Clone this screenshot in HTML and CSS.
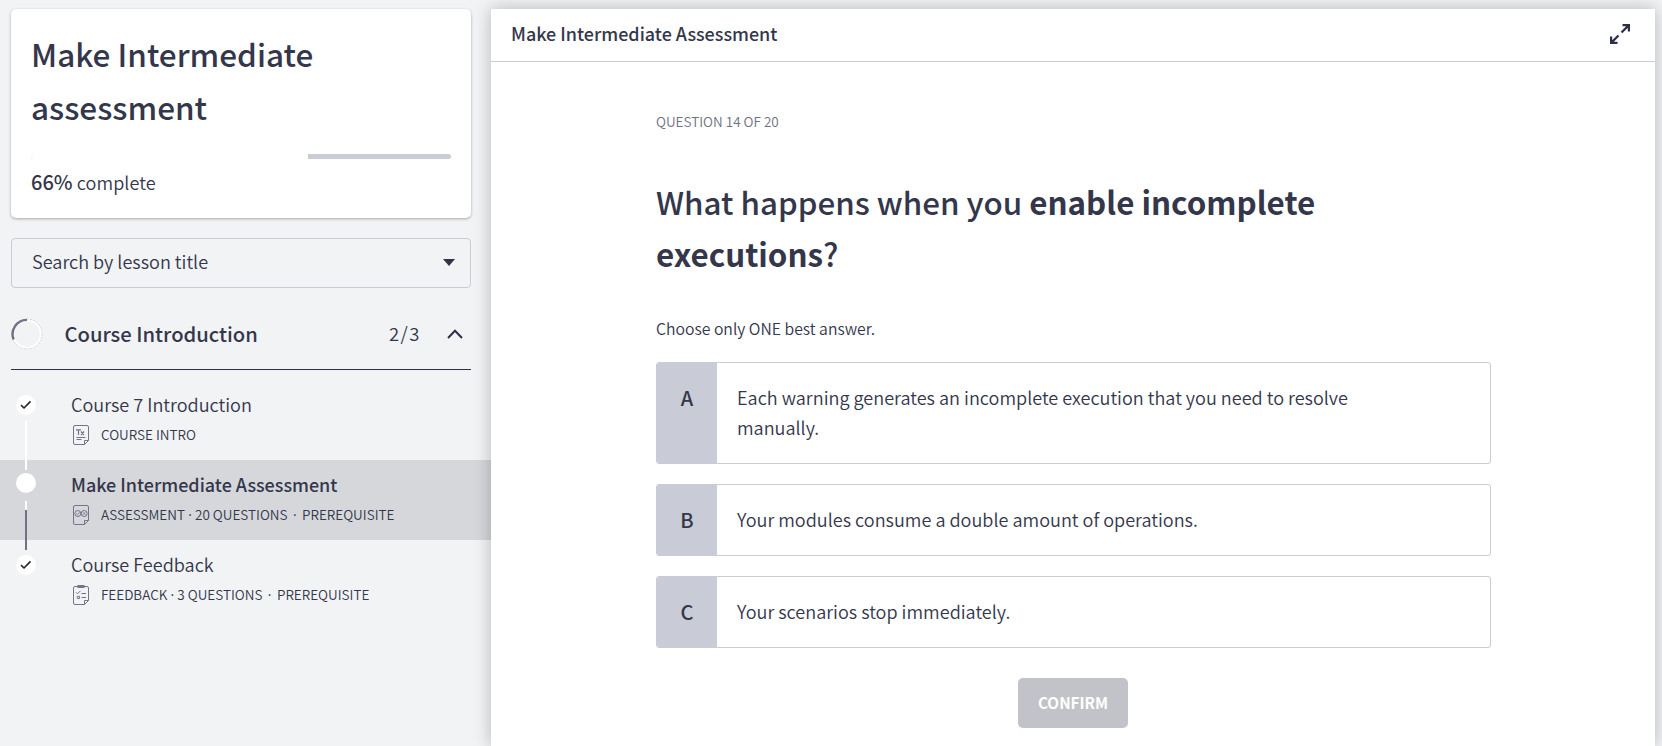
FILE: index.html
```html
<!DOCTYPE html>
<html lang="en">
<head>
<meta charset="utf-8">
<title>Make Intermediate Assessment</title>
<link rel="stylesheet" href="styles.css">
</head>
<body>
<div class="app">
  <aside class="sidebar">
    <section class="course-card">
      <h1 class="course-title">Make Intermediate assessment</h1>
      <div class="progress"><div class="progress-done" style="width:66%"></div></div>
      <p class="percent"><b>66%</b> <span>complete</span></p>
    </section>
    <div class="search"><span>Search by lesson title</span>
      <svg width="12" height="7" viewBox="0 0 12 7"><path d="M0 0h12L6 7z" fill="#313449"/></svg>
    </div>
    <div class="chapter">
      <svg class="ring" width="32" height="32" viewBox="0 0 32 32" fill="none">
        <circle cx="16" cy="16" r="14.700" stroke="#b4b5bd" stroke-width="1" stroke-dasharray="2 1"/>
        <circle cx="16" cy="16" r="13.800" stroke="#fff" stroke-width="2"/>
        <path d="M2.600 21.500A14.300 14.300 0 0 1 16 1.900" stroke="#6f7186" stroke-width="2.400"/>
      </svg>
      <span class="chapter-name">Course Introduction</span>
      <span class="chapter-count">2/3</span>
      <svg width="16" height="10" viewBox="0 0 16 10" fill="none"><path d="M1 9l7-7.300 7 7.300" stroke="#2d3046" stroke-width="2"/></svg>
    </div>
    <ul class="lessons">
      <li class="lesson">
        <div class="rail">
          <span class="dot"><svg width="12" height="10" viewBox="0 0 12 10" fill="none"><path d="M1 5.200l3 2.800 6.500-6.600" stroke="#222" stroke-width="1.600"/></svg></span>
        </div>
        <div class="lesson-body">
          <div class="lesson-name">Course 7 Introduction</div>
          <div class="lesson-meta">
            <svg width="16" height="20" viewBox="0 0 16 20" fill="none" stroke="#73758a"><path d="M11.500 19.500H2a1.500 1.500 0 0 1-1.500-1.500V2A1.500 1.500 0 0 1 2 .500h12A1.500 1.500 0 0 1 15.500 2V15.500l-4 4V15.500h4"/><path d="M3 4.800h5M5.500 4.800v5.200M8 6.500l3 3.500M11 6.500l-3 3.500" stroke-width="1.200"/><path d="M3.500 12.500h9M3.500 14.500h5"/></svg>
            <span>COURSE INTRO</span>
          </div>
        </div>
        <span class="link"></span>
      </li>
      <li class="lesson active">
        <div class="rail"><span class="dot"></span></div>
        <div class="lesson-body">
          <div class="lesson-name">Make Intermediate Assessment</div>
          <div class="lesson-meta">
            <svg width="16" height="20" viewBox="0 0 16 20" fill="none" stroke="#73758a"><path d="M11.500 19.500H2a1.500 1.500 0 0 1-1.500-1.500V2A1.500 1.500 0 0 1 2 .500h12A1.500 1.500 0 0 1 15.500 2V15.500l-4 4V15.500h4"/><circle cx="4.800" cy="8.500" r="3"/><circle cx="11.200" cy="8.500" r="3"/><path d="M3.300 8.500l1.200 1.200 2.200-2.400M10 7.300l2.400 2.400M12.400 7.300l-2.400 2.400" stroke-width=".9"/></svg>
            <span>ASSESSMENT<i class="sep">·</i>20 QUESTIONS<i class="sep wide">·</i>PREREQUISITE</span>
          </div>
        </div>
        <span class="link partial"></span>
      </li>
      <li class="lesson">
        <div class="rail">
          <span class="dot"><svg width="12" height="10" viewBox="0 0 12 10" fill="none"><path d="M1 5.200l3 2.800 6.500-6.600" stroke="#222" stroke-width="1.600"/></svg></span>
        </div>
        <div class="lesson-body">
          <div class="lesson-name">Course Feedback</div>
          <div class="lesson-meta">
            <svg width="16" height="20" viewBox="0 0 16 20" fill="none" stroke="#73758a"><path d="M11.500 19.500H2a1.500 1.500 0 0 1-1.500-1.500V3A1.500 1.500 0 0 1 2 1.500h12A1.500 1.500 0 0 1 15.500 3V15.500l-4 4V15.500h4"/><rect x="4.500" y=".5" width="7" height="2" rx=".6" fill="#73758a"/><path d="M3 7.300l1.500 1.500 3-3M8.500 8.500H13M8.500 12.500H13"/><path d="M4.300 11.300h2.200v2.200H4.300z"/></svg>
            <span>FEEDBACK<i class="sep">·</i>3 QUESTIONS<i class="sep wide">·</i>PREREQUISITE</span>
          </div>
        </div>
      </li>
    </ul>
  </aside>
  <main class="player">
    <header class="player-head">
      <span class="player-title">Make Intermediate Assessment</span>
      <svg width="20" height="20" viewBox="0 0 20 20" fill="none" stroke="#2d3046" stroke-width="2.200"><path d="M12.500 1.100H18.900v6.400M18.900 1.100l-7.400 7.400M7.500 18.900H1.100v-6.400M1.100 18.900l7.400-7.400"/></svg>
    </header>
    <div class="quiz">
      <div class="counter">QUESTION 14 OF 20</div>
      <h2 class="question">What happens when you <b>enable incomplete<br>executions</b>?</h2>
      <div class="hint">Choose only ONE best answer.</div>
      <div class="options">
        <div class="option"><div class="letter">A</div><div class="answer">Each warning generates an incomplete execution that you need to resolve<br>manually.</div></div>
        <div class="option"><div class="letter">B</div><div class="answer">Your modules consume a double amount of operations.</div></div>
        <div class="option"><div class="letter">C</div><div class="answer">Your scenarios stop immediately.</div></div>
      </div>
      <button class="confirm">CONFIRM</button>
    </div>
  </main>
</div>
</body>
</html>
```
FILE: styles.css
```css
* { box-sizing: border-box; }
body {
  margin: 0;
  height: 746px;
  overflow: hidden;
  background: #f1f3f5;
  color: #34374b;
  font-family: "Noto Sans CJK SC", "Noto Sans", sans-serif;
  font-size: 18.07px;
  font-weight: 350;
  white-space: nowrap;
}
h1, h2, p, ul { margin: 0; padding: 0; list-style: none; }
svg { display: block; flex: none; }
.app { display: flex; height: 746px; padding-top: 9px; }
.sidebar { width: 491px; flex: none; }
.course-card {
  margin-left: 11px;
  width: 460px;
  height: 209px;
  padding: 18px 20px 0;
  background: #fff;
  border-radius: 5px;
  box-shadow: 0 1px 3px rgba(0, 0, 0, .32);
}
.course-title { font-size: 31.5px; line-height: 53px; font-weight: 500; white-space: normal; width: 400px; }
.progress { height: 5px; margin-top: 21px; border-radius: 3px; background: #c9cbd6; overflow: hidden; }
.progress-done { height: 5px; background: #fff; }
.percent { margin-top: 8px; line-height: 30px; }
.percent b { font-weight: 500; font-size: 20px; }
.percent span { letter-spacing: .1px; }
.search {
  display: flex;
  align-items: center;
  justify-content: space-between;
  width: 460px;
  height: 50px;
  margin: 20px 0 0 11px;
  padding: 0 15px 2px 20px;
  border: 1px solid #c9cbd6;
  border-radius: 4px;
}
.search span { padding-bottom: 2px; }
.chapter {
  display: flex;
  align-items: center;
  width: 460px;
  height: 82px;
  margin-left: 11px;
  padding: 10px 8px 0 0;
  border-bottom: 1px solid #2d3046;
}
.chapter-name { flex: 1; margin-left: 21.5px; font-size: 20.2px; font-weight: 500; }
.chapter-count { margin-right: 26px; padding-bottom: 2px; font-size: 18.5px; letter-spacing: 1.5px; }
.lessons { margin-top: 10px; }
.lesson { position: relative; display: flex; height: 80px; padding: 9px 0 0 16px; }
.active { background: #d6d7db; }
.rail { width: 55px; padding-top: 6px; }
.dot { display: flex; align-items: center; justify-content: center; width: 20px; height: 20px; border-radius: 50%; background: #fff; }
.active .dot { margin-top: -2px; }
.lesson-name { line-height: 30px; }
.active .lesson-name { font-size: 17.95px; font-weight: 500; }
.lesson-meta { display: flex; align-items: center; gap: 12px; height: 30px; padding-left: 2px; font-size: 13.5px; line-height: 30px; }
.lesson-meta svg { margin-top: 2px; }
.sep { display: inline-block; width: 10px; text-align: center; font: 400 14px/20px "Open Sans", sans-serif; }
.wide { width: 14.5px; }
.link { position: absolute; z-index: 1; left: 25px; top: 41px; width: 2px; height: 49px; background: #fff; }
.partial { background: linear-gradient(#fff 9px, #6f7186 9px); }
.player { position: relative; z-index: 2; width: 1164px; background: #fff; box-shadow: 0 0 16px rgba(0, 0, 0, .25); }
.player-head {
  display: flex;
  align-items: center;
  justify-content: space-between;
  height: 53px;
  padding: 0 25px 3px 20px;
  border-bottom: 1px solid #c9cbd6;
}
.player-title { font-size: 17.95px; font-weight: 500; padding-bottom: 1px; }
.quiz { display: flex; flex-direction: column; width: 835px; margin-left: 165px; }
.counter { margin-top: 44px; height: 30px; font-size: 13.5px; line-height: 30px; color: #6f7183; }
.question { margin-top: 40px; font-size: 31.35px; line-height: 52px; font-weight: 500; }
.question b { font-weight: 700; }
.hint { margin-top: 34px; height: 30px; font-size: 15.75px; line-height: 30px; }
.options { display: grid; gap: 20px; margin-top: 18px; }
.option { display: flex; border: 1px solid #c9cbd6; border-radius: 3px; overflow: hidden; line-height: 30px; }
.letter { width: 60px; padding-top: 20px; background: #c9cbd6; text-align: center; font-size: 20px; font-weight: 500; }
.answer { padding: 19px 20px 21px; }
.confirm {
  align-self: center;
  width: 110px;
  height: 50px;
  margin: 30px 1px 0 0;
  padding: 0 0 2px;
  border: 0;
  border-radius: 5px;
  background: #c2c3c8;
  color: #fff;
  font: 700 15.3px/48px "Noto Sans CJK SC", sans-serif;
}
```
